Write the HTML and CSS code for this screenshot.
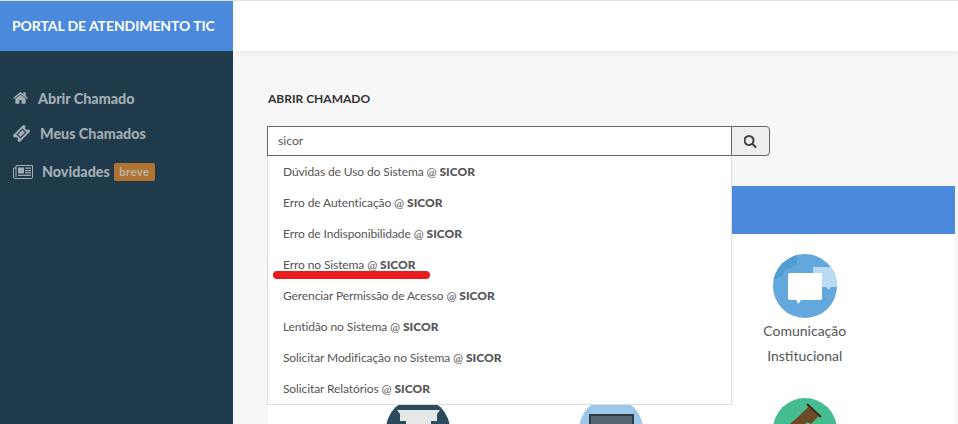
FILE: index.html
```html
<!DOCTYPE html>
<html>
	<head>
		<meta charset="UTF-8">
		<title>Portal de Atendimento TIC</title>
		<link rel="stylesheet" href="styles.css">
	</head>
	<body>
		<div class="app">
			<aside class="sidebar">
				<div class="brand">PORTAL DE ATENDIMENTO TIC</div>
				<ul class="menu">
					<li class="menu-home">
						<svg class="ico-home" viewBox="0 0 1664 1408"><path d="M1408 608v480q0 26-19 45t-45 19h-384v-384h-256v384h-384q-26 0-45-19t-19-45v-480q0-1 .5-3t.5-3l575-474 575 474q1 2 1 6zm223-69l-62 74q-8 9-21 11h-3q-13 0-21-7l-692-577-692 577q-12 8-24 7-13-2-21-11l-62-74q-8-10-7-23.5t11-21.5l719-599q32-26 76-26t76 26l244 204v-195q0-14 9-23t23-9h192q14 0 23 9t9 23v408l219 182q10 8 11 21.5t-7 23.5z" transform="translate(0 128)"/></svg>
						<span>Abrir Chamado</span>
					</li>
					<li class="menu-tickets">
						<svg class="ico-ticket" viewBox="0 0 16 16"><g transform="rotate(-45 8 8)"><path d="M.5 3.5h15v2.600a1.900 1.900 0 0 0 0 3.800v2.600H.5V9.900a1.900 1.900 0 0 0 0-3.800z"/><path d="M4 5.200h8v5.600H4z" fill="#1f3a4a"/><path d="M5 6.200h6v3.600H5z"/></g></svg>
						<span>Meus Chamados</span>
					</li>
					<li class="menu-news">
						<svg class="ico-news" viewBox="0 0 20 14"><path d="M3 .5h16.500v11.800a1.200 1.200 0 0 1-1.200 1.200H1.700A1.200 1.200 0 0 1 .5 12.300V3H3z" fill="none" stroke="currentColor"/><path d="M3 3v9" stroke="currentColor" fill="none"/><path d="M5 2.500h6v6H5zM12 2.500h6v1.200h-6zM12 5h6v1.200h-6zM12 7.300h6v1.200h-6zM5 9.800h13V11H5z"/></svg>
						<span>Novidades</span>
						<em class="badge">breve</em>
					</li>
				</ul>
			</aside>
			<div class="main">
				<header class="topbar"></header>
				<section class="content">
					<h1 class="title">ABRIR CHAMADO</h1>
					<div class="search">
						<div class="search-input">sicor</div>
						<div class="search-btn">
							<svg viewBox="0 0 1664 1664"><path d="M1088 704q0-185-131.500-316.500t-316.500-131.500-316.500 131.500-131.500 316.500 131.500 316.500 316.500 131.500 316.500-131.500 131.500-316.500zm512 832q0 52-38 90t-90 38q-54 0-90-38l-343-342q-179 124-399 124-143 0-273.500-55.500t-225-150-150-225-55.500-273.500 55.500-273.500 150-225 225-150 273.500-55.500 273.500 55.500 225 150 150 225 55.500 273.500q0 220-124 399l343 343q37 37 37 90z"/></svg>
						</div>
						<ul class="results">
							<li>Dúvidas de Uso do Sistema @ <b>SICOR</b></li>
							<li>Erro de Autenticação @ <b>SICOR</b></li>
							<li>Erro de Indisponibilidade @ <b>SICOR</b></li>
							<li>Erro no Sistema @ <b>SICOR</b></li>
							<li>Gerenciar Permissão de Acesso @ <b>SICOR</b></li>
							<li>Lentidão no Sistema @ <b>SICOR</b></li>
							<li>Solicitar Modificação no Sistema @ <b>SICOR</b></li>
							<li>Solicitar Relatórios @ <b>SICOR</b></li>
						</ul>
						<div class="mark"></div>
					</div>
					<div class="panel">
						<div class="panel-head"></div>
						<div class="tiles">
							<div class="tile tile-comm">
								<svg viewBox="0 0 64 64">
									<clipPath id="disc"><circle cx="32" cy="32" r="32"/></clipPath>
									<g clip-path="url(#disc)">
										<rect width="64" height="64" fill="#62a8dc"/>
										<path d="M0 0h24v11l-12 5-3 6-9 4z" fill="#4f9dd3"/>
										<path d="M40 13h24v20h-6l-2 3-3-3H40z" fill="#b9daf3"/>
									</g>
									<rect x="15" y="19" width="34" height="27" rx="2" fill="#fff"/>
									<path d="M23 45h6l-4 5z" fill="#fff"/>
								</svg>
								<p>Comunicação Institucional</p>
							</div>
							<div class="tile">
								<svg viewBox="0 0 64 64">
									<circle cx="32" cy="32" r="32" fill="#2b4a5c"/>
									<path d="M11 12h43l-3 4H14zM14 16h37v7H14zM20 23h25v6H20z" fill="#e6e8e8"/>
								</svg>
							</div>
							<div class="tile">
								<svg viewBox="0 0 64 64">
									<circle cx="32" cy="32" r="32" fill="#9cc8ea"/>
									<rect x="10" y="16" width="45" height="34" fill="#2e3b45"/>
									<rect x="12" y="18" width="41" height="30" fill="#566674"/>
								</svg>
							</div>
							<div class="tile">
								<svg viewBox="0 0 64 64">
									<circle cx="32" cy="32" r="32" fill="#45bd91"/>
									<path d="M36 8 46 18 38 26 34 24 18 40 10 32 26 18z" fill="#6d4a26"/>
									<path d="M34 6 48 19" fill="none" stroke="#3f2a17" stroke-width="2"/>
								</svg>
							</div>
						</div>
					</div>
				</section>
			</div>
		</div>
	</body>
</html>
```

FILE: styles.css
```css
*{
	margin: 0;
	padding: 0;
	box-sizing: border-box;
}
html,body{
	height: 100%;
	overflow: hidden;
}
body{
	font-family: Lato, "Liberation Sans", sans-serif;
	font-size: 13px;
	color: #555;
	background: #f7f7f7;
}
li{
	list-style: none;
}
.app{
	display: flex;
	height: 100%;
	border-top: 1px solid #e2e2e2;
}
.sidebar{
	width: 233px;
	flex-shrink: 0;
	background: #1f3a4a;
}
.brand{
	height: 50px;
	line-height: 49px;
	padding-left: 12px;
	background: #4a89dc;
	color: #fff;
	font-size: 14px;
	font-weight: 700;
	letter-spacing: -.08px;
	white-space: nowrap;
}
.menu{
	padding-top: 30px;
	color: #a3adb3;
	font-size: 14.3px;
	font-weight: 900;
}
.menu li{
	display: flex;
	align-items: center;
	height: 35px;
	padding-left: 13px;
}
.menu svg{
	fill: #a3adb3;
	color: #a3adb3;
	flex-shrink: 0;
}
.ico-home{
	width: 15px;
	height: 13px;
	margin-right: 10px;
}
.ico-ticket{
	width: 17px;
	height: 17px;
	margin-right: 10px;
}
.ico-news{
	width: 20px;
	height: 14px;
	margin-right: 9px;
}
.menu-news{
	margin-top: 3px;
}
.badge{
	margin-left: 4px;
	width: 41px;
	height: 18px;
	line-height: 18px;
	text-align: center;
	background: #b07331;
	border-radius: 2px;
	font-style: normal;
	font-size: 11.5px;
	font-weight: 700;
	letter-spacing: .3px;
	color: #b9b4a8;
}
.main{
	flex: 1;
	min-width: 0;
	overflow: hidden;
}
.topbar{
	height: 50px;
	background: #fff;
	box-shadow: 0 1px 6px rgba(0,0,0,.07);
}
.content{
	padding: 40px 3px 0 34px;
}
.title{
	font-size: 12px;
	font-weight: 700;
	line-height: 16px;
	color: #333;
	margin-left: 1px;
}
.search{
	position: relative;
	display: flex;
	width: 503px;
	height: 30px;
	margin-top: 19px;
}
.search-input{
	width: 464px;
	border: 1px solid #666;
	border-right: 0;
	background: #fff;
	line-height: 28px;
	padding-left: 10px;
	font-size: 12.2px;
	color: #555;
}
.search-btn{
	flex: 1;
	display: flex;
	align-items: center;
	justify-content: center;
	border: 1px solid #666;
	border-radius: 0 4px 4px 0;
	background: #eee;
}
.search-btn svg{
	width: 13px;
	height: 13px;
	fill: #444;
}
.results{
	position: absolute;
	top: 30px;
	left: 0;
	width: 465px;
	z-index: 2;
	background: #fff;
	border: 1px solid #ddd;
	border-top: 0;
}
.results li{
	height: 31px;
	line-height: 31px;
	padding-left: 15px;
	font-size: 12px;
	letter-spacing: -.1px;
	white-space: nowrap;
}
.results b{
	font-weight: 900;
	letter-spacing: 0;
}
.mark{
	position: absolute;
	top: 145px;
	left: 6px;
	width: 157px;
	height: 8px;
	z-index: 3;
	background: #e91c1c;
	border-radius: 4px;
}
.panel{
	margin-top: 30px;
	margin-left: 1px;
	background: #fff;
}
.panel-head{
	height: 48px;
	background: #4a89dc;
}
.tiles{
	display: grid;
	grid-template-columns: repeat(3, 193.5px);
	row-gap: 30px;
	padding: 20px 0 0 53px;
}
.tile{
	text-align: center;
}
.tile svg{
	display: block;
	width: 64px;
	height: 64px;
	margin: 0 auto;
}
.tile p{
	width: 110px;
	margin: 0 auto;
	font-size: 14px;
	line-height: 25px;
	color: #555;
}
.tile-comm{
	grid-column: 3;
}
```
